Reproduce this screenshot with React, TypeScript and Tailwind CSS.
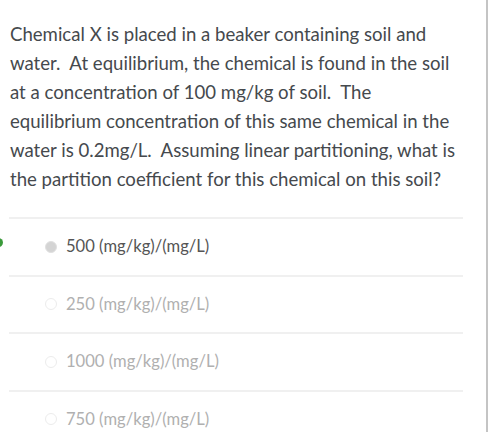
const answers = [
  { label: '500 (mg/kg)/(mg/L)', selected: true },
  { label: '250 (mg/kg)/(mg/L)', selected: false },
  { label: '1000 (mg/kg)/(mg/L)', selected: false },
  { label: '750 (mg/kg)/(mg/L)', selected: false },
];

export default function App() {
  return (
    <div className="h-[439px] w-[495px] overflow-hidden bg-white" style={{ fontFamily: 'Lato, "Open Sans", sans-serif' }}>
      <div className="relative h-[432px] w-[488px] border-r-2 border-[#c4c4c4]">
        {/* question */}
        <div className="pl-[10px] pr-[20px] pt-[20px] pb-[23px] text-[18.6px] leading-[29px] text-[#45494d]">
          Chemical X is placed in a beaker containing soil and water.&nbsp; At equilibrium, the chemical is found in the soil at a concentration of 100 mg/kg of soil.&nbsp; The equilibrium concentration of this same chemical in the water is 0.2mg/L.&nbsp; Assuming linear partitioning, what is the partition coefficient for this chemical on this soil?
        </div>

        {/* answers */}
        <div className="ml-[9px] w-[454px]">
          {answers.map((a) => (
            <div key={a.label} className="flex h-[57.5px] items-center border-t-2 border-[#f0f0f0] pl-[36px]">
              <span
                className={
                  a.selected
                    ? 'h-[12px] w-[12px] rounded-full border border-[#e0e0e0] bg-[#d4d4d4]'
                    : 'h-[12px] w-[12px] rounded-full border border-[#ececec] bg-white'
                }
              />
              <span className={a.selected ? 'ml-[9px] text-[16.6px] text-[#555]' : 'ml-[9px] text-[16.6px] text-[#b0b0b0]'}>
                {a.label}
              </span>
            </div>
          ))}
        </div>

        {/* green correct-answer marker, cut off at the left edge */}
        <span className="absolute left-[-6px] top-[238px] h-[9px] w-[9px] rounded-full bg-[#3a9a3a]" />
      </div>
    </div>
  );
}
